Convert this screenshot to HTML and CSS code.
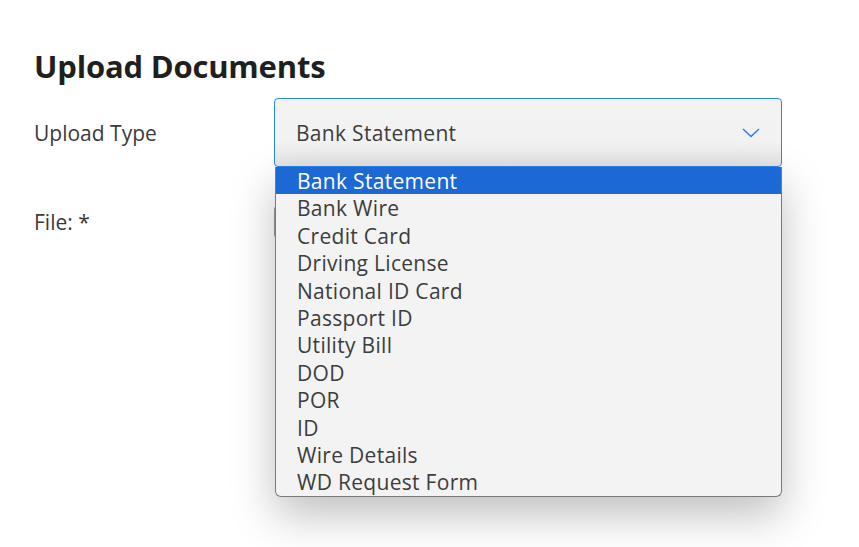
FILE: index.html
```html
<!DOCTYPE html>
<html>
<head>
<meta charset="utf-8">
<link rel="stylesheet" href="styles.css">
</head>
<body>
<div class="page">
  <h1 class="title">Upload Documents</h1>
  <div class="form-row row-type">
    <label class="label">Upload Type</label>
    <div class="select-wrap">
      <div class="select">
        <span class="select-value">Bank Statement</span>
        <svg class="chevron" width="18" height="10" viewBox="0 0 18 10"><path d="M1 1 L9 8.5 L17 1" fill="none" stroke="#2a7de1" stroke-width="1.4"/></svg>
      </div>
      <ul class="menu">
        <li class="option selected">Bank Statement</li>
        <li class="option">Bank Wire</li>
        <li class="option">Credit Card</li>
        <li class="option">Driving License</li>
        <li class="option">National ID Card</li>
        <li class="option">Passport ID</li>
        <li class="option">Utility Bill</li>
        <li class="option">DOD</li>
        <li class="option">POR</li>
        <li class="option">ID</li>
        <li class="option">Wire Details</li>
        <li class="option">WD Request Form</li>
      </ul>
    </div>
  </div>
  <div class="form-row row-file">
    <label class="label">File: *</label>
    <div class="file-input"></div>
  </div>
</div>
</body>
</html>
```
FILE: styles.css
```css
html, body {
  margin: 0;
  padding: 0;
  background: #ffffff;
}
body {
  font-family: "Open Sans", "Noto Sans", sans-serif;
  color: #3d3d3d;
  min-height: 547px;
}
.page {
  padding: 44px 0 0 34px;
  min-height: 503px;
}
.title {
  margin: 0;
  font-size: 31px;
  font-weight: 700;
  color: #1f1f1f;
  line-height: 44px;
  letter-spacing: -0.2px;
}
.form-row {
  display: flex;
  align-items: center;
}
.row-type {
  margin-top: 10px;
}
.label {
  width: 240px;
  font-size: 21px;
  color: #3a3a3a;
}
.select-wrap {
  position: relative;
  width: 508px;
}
.select {
  height: 67px;
  border: 1px solid #2a86ea;
  border-radius: 4px;
  background: linear-gradient(#f3f3f3 0%, #f2f2f2 65%, #e4e4e4 100%);
  display: flex;
  align-items: center;
  justify-content: space-between;
  padding: 0 21px 0 21px;
}
.select-value {
  font-size: 21px;
  letter-spacing: 0.3px;
  color: #3d3d3d;
}
.chevron {
  display: block;
}
.menu {
  position: absolute;
  top: 69px;
  left: 1px;
  right: 0;
  margin: 0;
  padding: 0;
  list-style: none;
  background: #f3f3f3;
  border: 1px solid #7a7a7a;
  border-top: none;
  border-radius: 0 0 6px 6px;
  box-shadow: 0 18px 44px rgba(0, 0, 0, 0.25);
  overflow: hidden;
  z-index: 5;
}
.option {
  height: 27.4px;
  line-height: 28px;
  padding-left: 21px;
  font-size: 21px;
  letter-spacing: 0.3px;
  color: #3d3d3d;
}
.option.selected {
  background: #1c68d4;
  color: #ffffff;
}
.row-file {
  margin-top: 39px;
}
.file-input {
  width: 506px;
  height: 30px;
  border: 1px solid #9a9a9a;
  border-radius: 3px;
}
```
